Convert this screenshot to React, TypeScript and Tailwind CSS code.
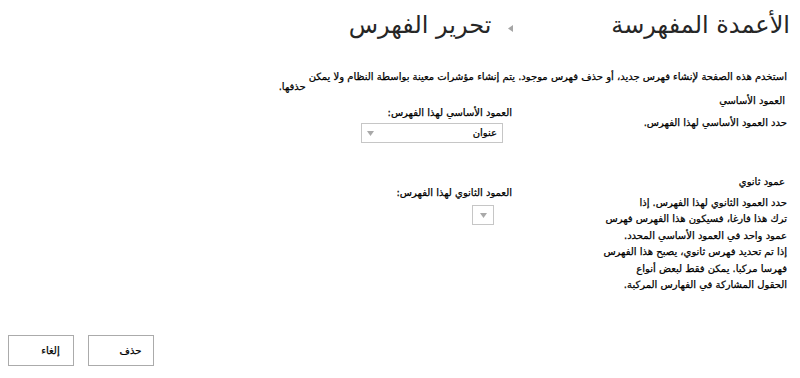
import React from 'react';

const FONT = "font-['DejaVu_Sans',sans-serif]";
// نص الصفحة في الأصل أثقل قليلا من DejaVu العادي
const INK = '[-webkit-text-stroke:0.25px_#000]';

// سهم صغير رمادي بين عنوان الصفحة وعنوان الصفحة الفرعية
function Crumb() {
  return (
    <svg width="5" height="7" viewBox="0 0 5 7" className="inline-block">
      <polygon points="5,0 5,7 0,3.5" fill="#a6a6a6" />
    </svg>
  );
}

function Arrow() {
  return (
    <svg width="7" height="5" viewBox="0 0 7 5" className="block">
      <polygon points="0,0 7,0 3.5,5" fill="#a9a9a9" />
    </svg>
  );
}

export default function App() {
  return (
    <div dir="rtl" className={`w-[800px] h-[378px] bg-white text-black overflow-hidden ${FONT}`}>
      {/* العنوان */}
      <header className="h-[70px] pt-[13px] pr-[10px] flex items-baseline text-[#262626]">
        <h1 className="text-[24px] leading-none font-normal">الأعمدة المفهرسة</h1>
        <span className="mr-[98px]">
          <Crumb />
        </span>
        <h2 className="mr-[17px] text-[24px] leading-none font-normal">تحرير الفهرس</h2>
      </header>

      <div className={`pr-[13px] text-[10px] ${INK}`}>
        <div className="flex items-start leading-[13px] whitespace-nowrap">
          <span>
            استخدم هذه الصفحة لإنشاء فهرس جديد، أو حذف فهرس موجود. يتم إنشاء مؤشرات معينة بواسطة النظام ولا يمكن
          </span>
          <span className="mr-[3px] mt-[10px]">حذفها.</span>
        </div>

        {/* العمود الأساسي */}
        <section className="flex items-start leading-[16px] whitespace-nowrap">
          <div className="w-[170px] shrink-0">
            <div className="pr-[2px]">العمود الأساسي</div>
            <div className="mt-[6px]">حدد العمود الأساسي لهذا الفهرس.</div>
          </div>
          <div className="mr-[105px] pt-[12px]">
            <div>العمود الأساسي لهذا الفهرس:</div>
            <div className="mr-[9px] mt-[2px] w-[142px] h-[20px] border border-[#c6c6c6] bg-white flex items-center justify-between pr-[5px] pl-[5px]">
              <span className="leading-none">عنوان</span>
              <Arrow />
            </div>
          </div>
        </section>

        {/* عمود ثانوي */}
        <section className="mt-[31px] flex items-start whitespace-nowrap">
          <div className="w-[170px] shrink-0">
            <div className="pr-[2px] leading-[16px]">عمود ثانوي</div>
            <div className="mt-[5px] leading-[16.4px]">
              <div>حدد العمود الثانوي لهذا الفهرس. إذا</div>
              <div>ترك هذا فارغا، فسيكون هذا الفهرس فهرس</div>
              <div>عمود واحد في العمود الأساسي المحدد.</div>
              <div>إذا تم تحديد فهرس ثانوي، يصبح هذا الفهرس</div>
              <div>فهرسا مركبا. يمكن فقط لبعض أنواع</div>
              <div>الحقول المشاركة في الفهارس المركبة.</div>
            </div>
          </div>
          <div className="mr-[105px] pt-[11px] leading-[16px]">
            <div>العمود الثانوي لهذا الفهرس:</div>
            <div className="mr-[18px] mt-[4px] w-[22px] h-[20px] border border-[#c6c6c6] bg-white flex items-center justify-center">
              <Arrow />
            </div>
          </div>
        </section>
      </div>

      {/* الأزرار */}
      <div className={`mt-[42px] pl-[8px] flex justify-end gap-[14px] text-[10px] leading-none ${INK}`}>
        <button className="w-[66px] h-[31px] border border-[#ababab] bg-white pl-[19px] text-black">
          حذف
        </button>
        <button className="w-[66px] h-[31px] border border-[#ababab] bg-white pl-[19px] text-black">
          إلغاء
        </button>
      </div>
    </div>
  );
}
